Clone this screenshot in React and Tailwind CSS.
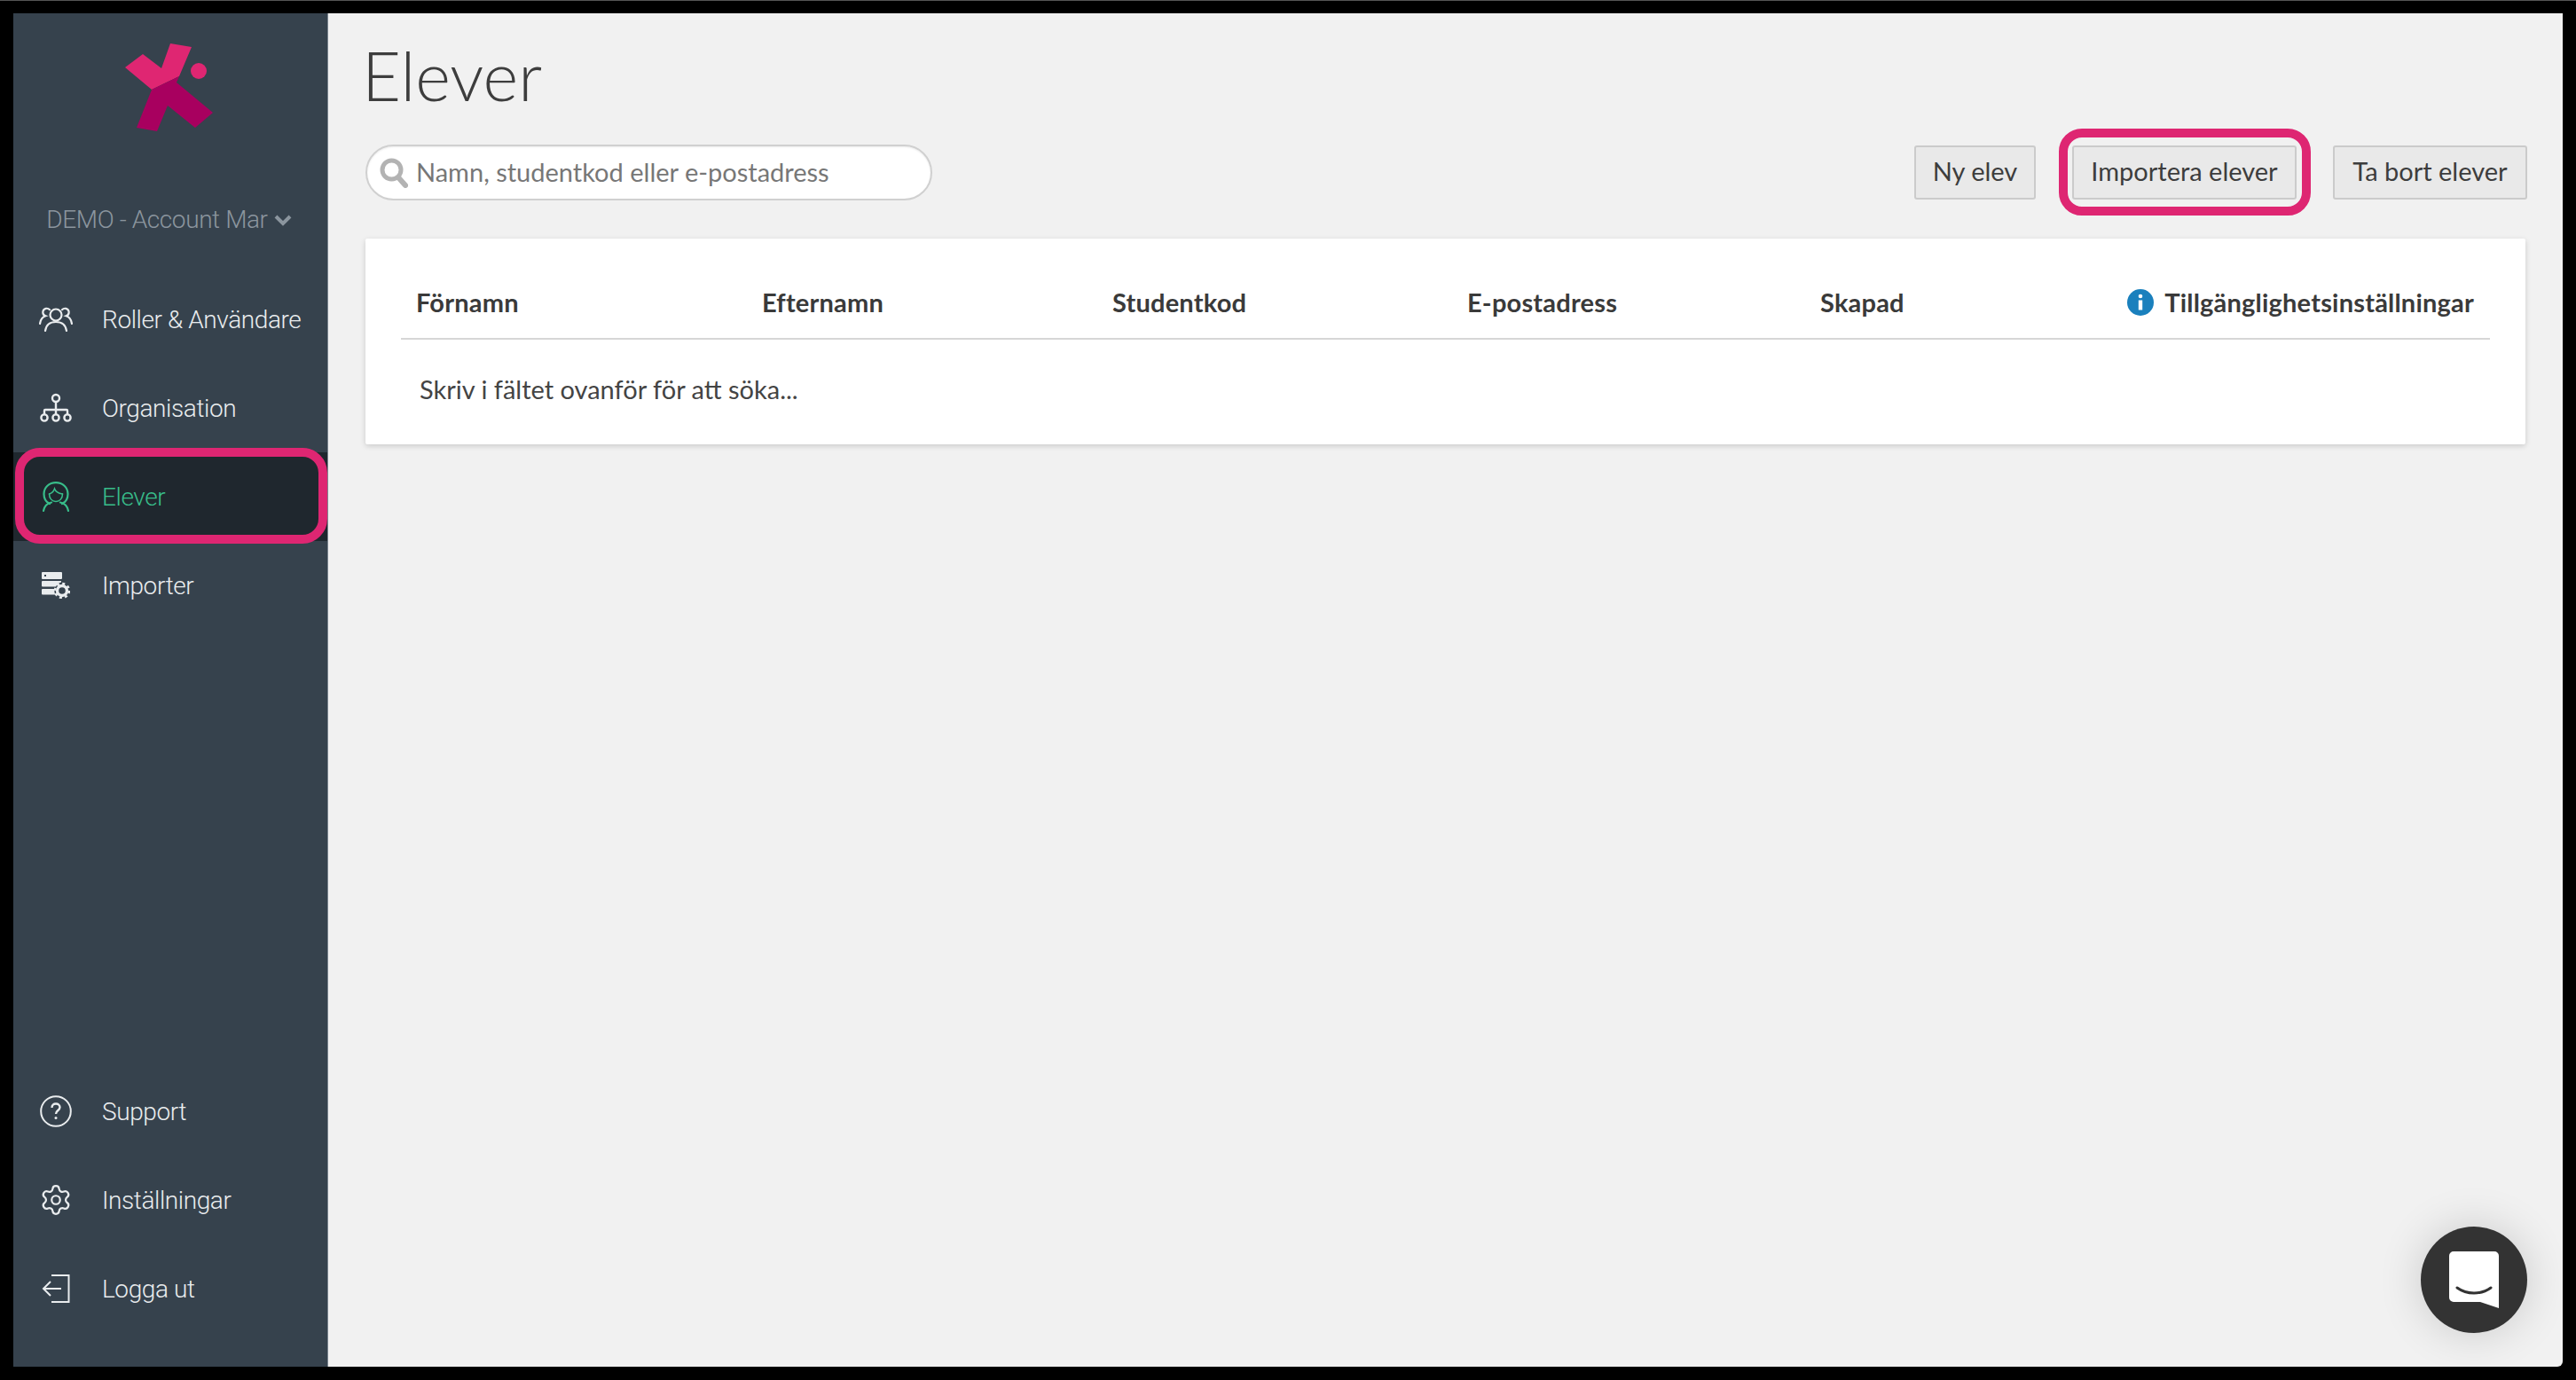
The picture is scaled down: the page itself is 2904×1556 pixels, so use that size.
import { Settings } from 'lucide-react';

const Logo = () => (
  <svg viewBox="0 0 102 102" className="w-[102px] h-[102px]">
    <polygon fill="#df2672" points="1,28 21,13 42,29 52,1 76,5 62,38 31,53" />
    <polygon fill="#a8005f" points="31,53 62,38 59,45 100,79 80,96 49,71 37,100 14,96" />
    <circle cx="84" cy="32" r="9" fill="#df2672" />
  </svg>
);

const UsersIcon = () => (
  <svg viewBox="0 0 38 28" className="w-[38px] h-[28px]" fill="none" stroke="currentColor" strokeWidth="2.2" strokeLinecap="round">
    <circle cx="19" cy="9" r="6.5" />
    <path d="M7 27c1-7 6-10 12-10s11 3 12 10" />
    <path d="M12 3.2C10 1 5.5 1.2 4.6 4.6c-.7 2.6.6 4.8 2.8 5.6C3.8 11.400 1.600 14.500 1 19" />
    <path d="M26 3.200C28 1 32.500 1.200 33.400 4.600c.7 2.600-.6 4.800-2.800 5.600 3.600 1.200 5.800 4.300 6.400 8.800" />
  </svg>
);

const OrgIcon = () => (
  <svg viewBox="0 0 36 34" className="w-[36px] h-[34px]" fill="none" stroke="currentColor" strokeWidth="2.4">
    <circle cx="18" cy="6" r="4" />
    <path d="M18 10v12M5 25v-5a1 1 0 0 1 1-1h24a1 1 0 0 1 1 1v5M18 19v6" />
    <circle cx="5" cy="28" r="3.600" />
    <circle cx="18" cy="28" r="3.600" />
    <circle cx="31" cy="28" r="3.600" />
  </svg>
);

const StudentIcon = () => (
  <svg viewBox="0 0 30 34" className="w-[30px] h-[34px]" fill="none" stroke="currentColor" strokeWidth="2.2" strokeLinecap="round">
    <path d="M8 25C3.500 23 1.500 18.500 1.500 14 1.500 6.500 7.500 1.200 15 1.200S28.500 6.500 28.500 14c0 4.500-2 9-6.500 11" />
    <path d="M7.500 14c0 5 3.200 8.500 7.500 8.500s7.500-3.500 7.500-8.500" strokeWidth="1.500" />
    <path d="M7.500 14c3-.8 5-3 6-6 1 3 4 5.200 9 6" strokeWidth="1.500" />
    <path d="M1 33c1-5 4-8.500 9-9.500M29 33c-1-5-4-8.500-9-9.500" />
  </svg>
);

const ImportIcon = () => (
  <svg viewBox="0 0 32 30" className="w-[32px] h-[30px]">
    <path fillRule="evenodd" fill="currentColor" d="M1 0h21a1 1 0 0 1 1 1v6a1 1 0 0 1-1 1H1a1 1 0 0 1-1-1V1a1 1 0 0 1 1-1zm2 3v2h2V3z" />
    <path fill="currentColor" d="M1 10h21v1.500a9 9 0 0 0-6 5H1a1 1 0 0 1-1-1v-4.500a1 1 0 0 1 1-1zM1 19h13.500c-.3 2.500 0 4.500.8 6.500H1a1 1 0 0 1-1-1v-4.500a1 1 0 0 1 1-1z" />
    <circle cx="23" cy="21" r="5.500" fill="none" stroke="currentColor" strokeWidth="3.400" />
    <circle cx="23" cy="21" r="8" fill="none" stroke="currentColor" strokeWidth="2.600" strokeDasharray="3 3.280" />
  </svg>
);

const HelpIcon = () => (
  <svg viewBox="0 0 36 36" className="w-[36px] h-[36px]" fill="none" stroke="currentColor" strokeWidth="2">
    <circle cx="18" cy="18" r="16.800" />
    <path d="M13.500 14c0-3 2-4.500 4.500-4.500s4.500 1.600 4.500 4c0 3.500-4.500 3.500-4.500 7.500" strokeWidth="2.400" />
    <circle cx="18" cy="25.500" r="1.500" fill="currentColor" stroke="none" />
  </svg>
);

const LogoutIcon = () => (
  <svg viewBox="0 0 32 34" className="w-[32px] h-[34px]" fill="none" stroke="currentColor" strokeWidth="2">
    <path d="M11 2h19.500v30H11" />
    <path d="M22 17H2M10 9l-8 8 8 8" />
  </svg>
);

const NavItem = ({ icon, label, active }) => (
  <div className={`h-[100px] flex items-center ${active ? 'bg-[#1f272e] text-[#38bd8a]' : 'text-[#e9ecee]'}`}>
    <div className="w-[100px] pr-[5px] flex justify-center">{icon}</div>
    <span className="pt-[2px] text-[28px] tracking-[-0.4px] font-light">{label}</span>
  </div>
);

const TOP_NAV = [
  { label: 'Roller & Användare', icon: <UsersIcon /> },
  { label: 'Organisation', icon: <OrgIcon /> },
  { label: 'Elever', icon: <StudentIcon />, active: true },
  { label: 'Importer', icon: <ImportIcon /> },
];

const BOTTOM_NAV = [
  { label: 'Support', icon: <HelpIcon /> },
  { label: 'Inställningar', icon: <Settings size={38} strokeWidth={1.4} /> },
  { label: 'Logga ut', icon: <LogoutIcon /> },
];

const COLUMNS = ['Förnamn', 'Efternamn', 'Studentkod', 'E-postadress', 'Skapad'];

const Sidebar = () => (
  <aside className="w-[355px] shrink-0 bg-[#36424d] border-r border-[#7d8791] flex flex-col font-['Roboto',sans-serif]">
    <div className="h-[295px] pt-[33px] pr-[3px] flex flex-col items-center">
      <Logo />
      <div className="mt-[81px] flex items-center text-[#8b959e] text-[28px] tracking-[-0.4px] font-light leading-[34px]">
        <span className="whitespace-nowrap">DEMO - Account Mar</span>
        <svg viewBox="0 0 20 14" className="w-[20px] h-[14px] ml-[7px]" fill="none" stroke="currentColor" strokeWidth="4">
          <path d="M2 3l8 8 8-8" />
        </svg>
      </div>
    </div>
    <nav className="relative">
      {TOP_NAV.map((item) => (
        <NavItem key={item.label} {...item} />
      ))}
      {/* pink annotation round the active row */}
      <div className="absolute left-[2px] right-0 top-[195px] h-[108px] border-[10px] border-[#de2672] rounded-[28px]" />
    </nav>
    <div className="mt-auto pb-[38px]">
      {BOTTOM_NAV.map((item) => (
        <NavItem key={item.label} {...item} />
      ))}
    </div>
  </aside>
);

const SearchBox = () => (
  <div className="w-[639px] h-[63px] rounded-full bg-white border-2 border-[#d0d0d0] flex items-center pl-[14px] shadow-[inset_0_1px_2px_rgba(0,0,0,0.08)]">
    <svg viewBox="0 0 32 34" className="w-[32px] h-[34px] shrink-0 text-[#b3b3b3]" fill="none" stroke="currentColor">
      <circle cx="13.500" cy="13.500" r="10.500" strokeWidth="5" />
      <path d="M21 22l8 9" strokeWidth="6" strokeLinecap="round" />
    </svg>
    <input
      className="ml-[9px] -mt-[2px] flex-1 bg-transparent outline-none text-[29px] text-[#444] placeholder:text-[#777]"
      placeholder="Namn, studentkod eller e-postadress"
    />
  </div>
);

const ToolButton = ({ label, className = '' }) => (
  <button className={`h-[61px] pb-[4px] bg-[#e9e9e9] border-2 border-[#cbcbcb] rounded-[3px] text-[29px] text-[#3d3d3d] ${className}`}>
    {label}
  </button>
);

export default function App() {
  return (
    <div className="w-[2904px] h-[1556px] bg-black border-t border-[#555] p-[14px_15px_15px_15px] overflow-hidden">
      <div className="relative h-full flex overflow-hidden rounded-br-[6px] font-['Lato',sans-serif]">
        <Sidebar />
        <main className="flex-1 bg-[#f1f1f1] px-[42px]">
          <h1 className="h-[148px] pt-[29px] -ml-[4px] text-[76px] leading-[82px] font-light text-[#3d3d3d]">Elever</h1>

          <div className="flex items-center justify-between">
            <SearchBox />
            <div className="flex items-center -mr-[2px]">
              <ToolButton label="Ny elev" className="w-[137px]" />
              <div className="relative ml-[41px]">
                <ToolButton label="Importera elever" className="w-[253px] block" />
                <div className="absolute -left-[15px] -right-[16px] -top-[19px] -bottom-[18px] border-[10px] border-[#de2672] rounded-[26px]" />
              </div>
              <ToolButton label="Ta bort elever" className="w-[219px] ml-[41px]" />
            </div>
          </div>

          <section className="mt-[43px] h-[232px] bg-white rounded-[2px] shadow-[0_2px_6px_rgba(0,0,0,0.16)] pt-[44px] px-[40px]">
            <div className="h-[70px] pl-[17px] pr-[18px] border-b-2 border-[#d6d6d6] grid grid-cols-[390px_395px_400px_398px_1fr_auto] items-start text-[29px] tracking-[0.2px] font-bold text-[#3a3a3a]">
              {COLUMNS.map((col) => (
                <div key={col} className="h-[60px] leading-[60px] -mt-[2px]">{col}</div>
              ))}
              <div className="h-[60px] -mt-[2px] flex items-center gap-[12px]">
                <svg viewBox="0 0 30 30" className="w-[30px] h-[30px] shrink-0">
                  <circle cx="15" cy="15" r="15" fill="#1a80bd" />
                  <circle cx="15" cy="8" r="2.300" fill="#fff" />
                  <path d="M12.800 12.500h4.400v11h-4.400z" fill="#fff" />
                </svg>
                <span>Tillgänglighetsinställningar</span>
              </div>
            </div>
            <p className="mt-[36px] pl-[21px] text-[29px] leading-[40px] text-[#444]">Skriv i fältet ovanför för att söka...</p>
          </section>
        </main>

        {/* chat launcher floats over the page */}
        <div className="absolute right-[40px] bottom-[38px] w-[120px] h-[120px] rounded-full bg-[#333] flex items-center justify-center shadow-[0_0_50px_rgba(0,0,0,0.16)]">
          <svg viewBox="0 0 56 64" className="w-[56px] h-[64px]">
            <path fill="#fff" d="M5 0h46a5 5 0 0 1 5 5v59l-21-7H5a5 5 0 0 1-5-5V5a5 5 0 0 1 5-5z" />
            <path fill="none" stroke="#333" strokeWidth="3" strokeLinecap="round" d="M9 41c11 8 27 8 38 0" />
          </svg>
        </div>
      </div>
    </div>
  );
}
